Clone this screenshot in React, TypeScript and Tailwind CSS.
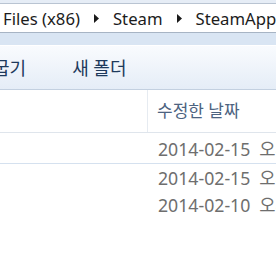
import React from "react";

const Crumb = () => (
  <svg width="5" height="9" viewBox="0 0 5 9" className="shrink-0">
    <polygon points="0,0 5,4.5 0,9" fill="#1a1a1a" />
  </svg>
);

const rows = [
  { date: "2014-02-15", time: "오후 3:12", h: "h-[31px] pt-[3px] border-b border-[#d5e1ef]" },
  { date: "2014-02-15", time: "오후 2:47", h: "h-[27px] pt-[1px]" },
  { date: "2014-02-10", time: "오후 9:05", h: "h-[27px] pt-[1px]" },
];

export default function App() {
  return (
    <div
      className="w-[276px] h-[260px] overflow-hidden bg-white flex flex-col"
      style={{ fontFamily: '"Noto Sans", "Noto Sans CJK KR", sans-serif' }}
    >
      {/* address bar */}
      <div className="h-[3px] bg-[#e6edf6] border-b border-[#b9c4d2] box-content" />
      <div className="h-[29px] pt-[1px] bg-white border-b border-[#a7b4c4] flex items-center pl-[3px] text-[16.7px] text-[#1c1c1c] whitespace-nowrap">
        <span>Files (x86)</span>
        <span className="px-[14px] flex items-center">
          <Crumb />
        </span>
        <span>Steam</span>
        <span className="px-[14px] flex items-center">
          <Crumb />
        </span>
        <span>SteamApps</span>
      </div>
      <div className="h-[12px] bg-[#d9e5f3]" />

      {/* command bar */}
      <div className="h-[45px] pt-[1px] border-t border-white bg-gradient-to-b from-[#f9fbfe] to-[#e5edf7] border-b border-b-[#c3d0e0] flex items-center text-[18px] text-[#1e3a5c] whitespace-nowrap">
        <span className="-ml-[7px]">굽기</span>
        <span className="ml-[46px]">새 폴더</span>
      </div>

      {/* column header */}
      <div className="h-[43px] bg-white border-b border-[#dfe5ec] flex text-[17px] text-[#4d6380] whitespace-nowrap">
        <div className="w-[148px] border-r border-[#e6ebf1]" />
        <div className="flex items-center pl-[9px]">수정한 날짜</div>
      </div>

      {/* rows */}
      {rows.map((r, i) => (
        <div key={i} className={`${r.h} flex text-[17.7px] text-[#6e6e6e] whitespace-nowrap`}>
          <div className="w-[149px] shrink-0" />
          <div className="flex items-center pl-[9px] gap-[9px]">
            <span>{r.date}</span>
            <span>{r.time}</span>
          </div>
        </div>
      ))}
    </div>
  );
}
